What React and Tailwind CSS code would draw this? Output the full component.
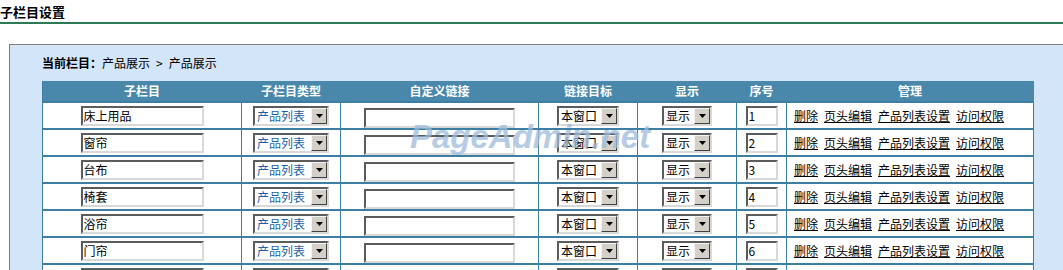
import React from "react"

const rows = [
  { name: "床上用品", no: "1" },
  { name: "窗帘", no: "2" },
  { name: "台布", no: "3" },
  { name: "椅套", no: "4" },
  { name: "浴帘", no: "5" },
  { name: "门帘", no: "6" },
  { name: "靠垫", no: "7" },
]

const font = { fontFamily: '"Noto Sans CJK SC", "Liberation Sans", sans-serif' }

// classic windows-style inset box
const inset =
  "border-2 border-t-[#5c5c5c] border-l-[#5c5c5c] border-b-[#d9d9d9] border-r-[#d9d9d9] bg-white"

const Arrow = () => (
  <span className="flex h-[16px] w-[16px] shrink-0 items-center justify-center border border-t-[#f4f4f4] border-l-[#f4f4f4] border-b-[#404040] border-r-[#404040] bg-[#d4d0c8]">
    <svg width="7" height="4" viewBox="0 0 7 4">
      <polygon points="0,0 7,0 3.5,4" fill="#000" />
    </svg>
  </span>
)

const Select = ({ text, className, textClass }) => (
  <div className={`inline-flex h-[20px] items-center justify-between ${inset} ${className}`}>
    <span className={`pl-[2px] text-[12px] leading-[16px] ${textClass}`}>{text}</span>
    <Arrow />
  </div>
)

const Input = ({ value, className }) => (
  <div className={`inline-flex h-[20px] items-center ${inset} ${className}`}>
    <span className="pl-[1px] text-[12px] leading-[16px] text-black">{value}</span>
  </div>
)

const cell = "border-r border-b-2 border-[#3d7ea5] p-0 text-center align-middle"

export default function App() {
  return (
    <div className="min-h-[270px] overflow-hidden bg-white text-black" style={font}>
      <div className="h-[24px] border-b-2 border-[#2a7b56] pt-[4px] text-[13px] font-bold leading-[16px]">
        子栏目设置
      </div>

      <div className="relative ml-[9px] mt-[20px] border-l border-t border-[#7f7f7f] bg-[#d3e5f8] pl-[32px] pb-[20px]">
        <div className="pt-[10px] text-[12px] leading-[16px]">
          <span className="font-bold">当前栏目：</span>产品展示<span className="mx-[6px]">&gt;</span>产品展示
        </div>

        <table className="mt-[10px] w-[992px] table-fixed border-separate border-spacing-0 border-l border-[#3d7ea5] bg-white text-[12px]">
          <colgroup>
            <col className="w-[199px]" />
            <col className="w-[99px]" />
            <col className="w-[198px]" />
            <col className="w-[99px]" />
            <col className="w-[99px]" />
            <col className="w-[50px]" />
            <col className="w-[247px]" />
          </colgroup>
          <thead>
            <tr className="bg-[#4a88ab] text-white">
              {["子栏目", "子栏目类型", "自定义链接", "链接目标", "显示", "序号", "管理"].map((h) => (
                <th key={h} className={`${cell} h-[22px] border-r-[#4a88ab] font-bold leading-[16px]`}>
                  {h}
                </th>
              ))}
            </tr>
          </thead>
          <tbody>
            {rows.map((r) => (
              <tr key={r.no}>
                <td className={`${cell} h-[27px]`}>
                  <Input value={r.name} className="w-[123px]" />
                </td>
                <td className={cell}>
                  <Select text="产品列表" className="w-[76px]" textClass="text-[#1d5fa6]" />
                </td>
                <td className={cell}>
                  <Input value="" className="w-[151px]" />
                </td>
                <td className={cell}>
                  <Select text="本窗口" className="w-[62px]" textClass="text-black" />
                </td>
                <td className={cell}>
                  <Select text="显示" className="w-[50px]" textClass="text-black" />
                </td>
                <td className={cell}>
                  <Input value={r.no} className="w-[32px]" />
                </td>
                <td className={`${cell} pl-[7px] text-left leading-[16px]`}>
                  <div className="flex gap-[6px]">
                    <a className="underline">删除</a>
                    <a className="underline">页头编辑</a>
                    <a className="underline">产品列表设置</a>
                    <a className="underline">访问权限</a>
                  </div>
                </td>
              </tr>
            ))}
          </tbody>
        </table>

        {/* watermark over the table */}
        <div
          className="pointer-events-none absolute left-[400px] top-[72px] text-[33px] font-bold italic leading-[40px] text-[#9dbcdc] opacity-75"
          style={{ fontFamily: '"Liberation Sans", Arial, sans-serif' }}
        >
          PageAdmin.net
        </div>
      </div>
    </div>
  )
}
